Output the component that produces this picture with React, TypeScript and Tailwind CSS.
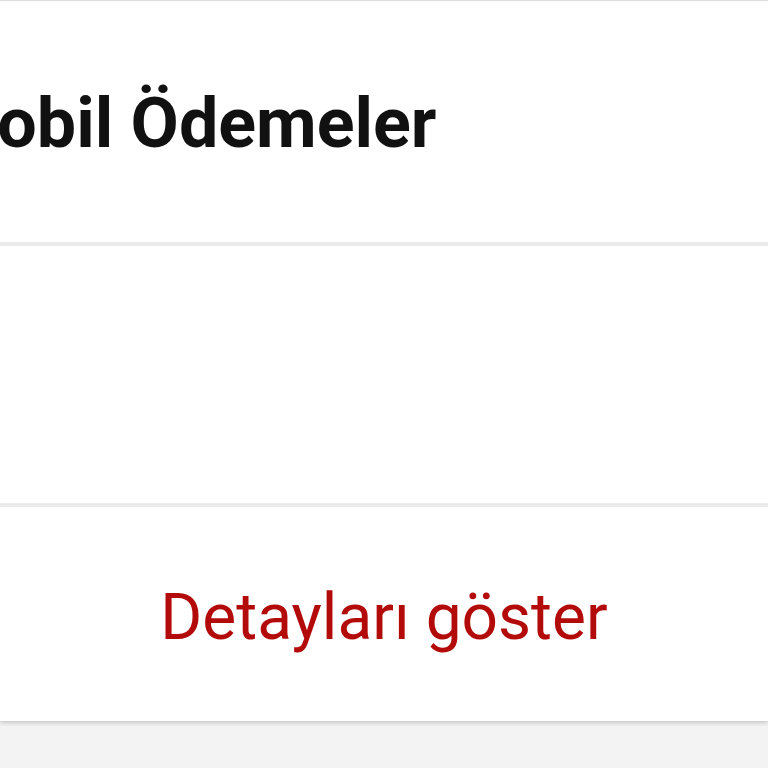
export default function App() {
  return (
    <div className="w-[768px] h-[768px] overflow-hidden bg-[#f3f3f3] font-['Roboto',sans-serif]">
      <div className="bg-white border-t border-[#dddddd] shadow-[0_2px_4px_rgba(0,0,0,0.18)]">
        <div className="h-[241px] flex items-center overflow-hidden">
          <h1 className="ml-[-64px] whitespace-nowrap text-[70px] font-bold text-[#111111] leading-none pt-[2px]">
            Mobil Ödemeler
          </h1>
        </div>
        <div className="h-[4px] bg-[#ebebeb]" />
        <div className="h-[257px]" />
        <div className="h-[4px] bg-[#ebebeb]" />
        <div className="h-[214px] flex items-center justify-center">
          <span className="text-[64px] text-[#b30a0a] leading-none pt-[8px]">Detayları göster</span>
        </div>
      </div>
    </div>
  )
}
